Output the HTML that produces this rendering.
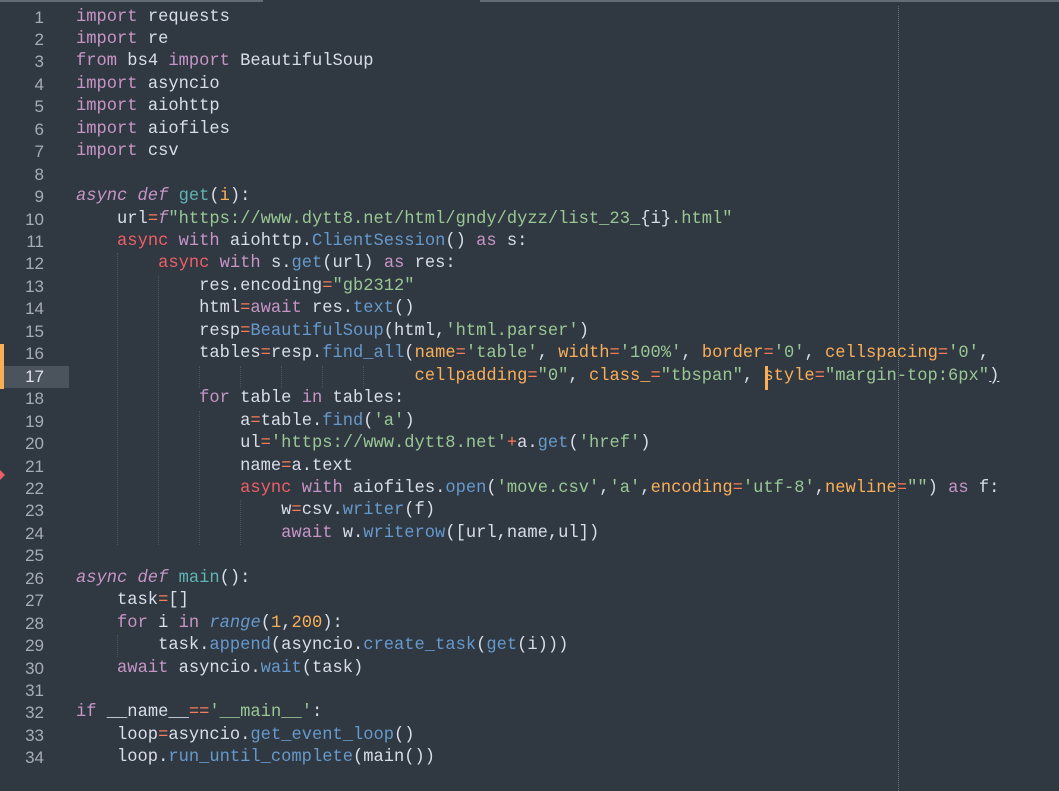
<!DOCTYPE html>
<html><head><meta charset="utf-8"><style>
html,body{margin:0;padding:0;width:1059px;height:791px;overflow:hidden;background:#303841;}
.l{position:absolute;left:76px;height:22px;line-height:22px;font:17.1px "Liberation Mono",monospace;color:#d8dee9;white-space:pre;}
.n{position:absolute;width:44px;text-align:right;height:22px;line-height:22px;font:17px "Liberation Sans",sans-serif;color:#a6acb9;left:0;}
.k{color:#c695c6}.r{color:#ec5f67}.b{color:#6699cc}.s{color:#99c794}.o{color:#f9ae58}.t{color:#5fb4b4}.p{color:#f97b58}.i{font-style:italic}
.g{position:absolute;width:0;border-left:1px dotted #4a525d;}
</style></head><body>
<div style="position:absolute;left:0;top:0;width:263px;height:2px;background:#646b75"></div>
<div style="position:absolute;left:480px;top:0;width:579px;height:2px;background:#646b75"></div>
<div style="position:absolute;left:898px;top:6px;height:785px;border-left:1px dotted #6a717b"></div>
<div style="position:absolute;left:0;top:344px;width:4px;height:45px;background:#f9ae58"></div>
<div style="position:absolute;left:4px;top:366px;width:65px;height:22px;background:#4b535d"></div>
<div style="position:absolute;left:0;top:470px;width:0;height:0;border-top:5px solid transparent;border-bottom:5px solid transparent;border-left:5px solid #ec5f67"></div>
<div class="g" style="left:117px;top:253px;height:292px"></div>
<div class="g" style="left:158px;top:276px;height:269px"></div>
<div class="g" style="left:199px;top:411px;height:134px"></div>
<div class="g" style="left:240px;top:500px;height:45px"></div>
<div class="g" style="left:199px;top:366px;height:22px"></div>
<div class="g" style="left:240px;top:366px;height:22px"></div>
<div class="g" style="left:281px;top:366px;height:22px"></div>
<div class="g" style="left:322px;top:366px;height:22px"></div>
<div class="g" style="left:363px;top:366px;height:22px"></div>
<div class="g" style="left:117px;top:635px;height:22px"></div>
<div style="position:absolute;left:765px;top:366px;width:3px;height:24px;background:#f9ae58"></div>
<div id="c"></div>
<script>
var L=[
'<span class="k">import</span> requests',
'<span class="k">import</span> re',
'<span class="k">from</span> bs4 <span class="k">import</span> BeautifulSoup',
'<span class="k">import</span> asyncio',
'<span class="k">import</span> aiohttp',
'<span class="k">import</span> aiofiles',
'<span class="k">import</span> csv',
'',
'<span class="k i">async def</span> <span class="t">get</span>(<span class="o">i</span>):',
'    url<span class="p">=</span><span class="k i">f</span><span class="s">"https://www.dytt8.net/html/gndy/dyzz/list_23_</span>{i}<span class="s">.html"</span>',
'    <span class="r">async</span> <span class="k">with</span> aiohttp.<span class="b">ClientSession</span>() <span class="k">as</span> s:',
'        <span class="r">async</span> <span class="k">with</span> s.<span class="b">get</span>(url) <span class="k">as</span> res:',
'            res.encoding<span class="p">=</span><span class="s">"gb2312"</span>',
'            html<span class="p">=</span><span class="k">await</span> res.<span class="b">text</span>()',
'            resp<span class="p">=</span><span class="b">BeautifulSoup</span>(html,<span class="s">\'html.parser\'</span>)',
'            tables<span class="p">=</span>resp.<span class="b">find_all</span>(<span class="o">name</span><span class="p">=</span><span class="s">\'table\'</span>, <span class="o">width</span><span class="p">=</span><span class="s">\'100%\'</span>, <span class="o">border</span><span class="p">=</span><span class="s">\'0\'</span>, <span class="o">cellspacing</span><span class="p">=</span><span class="s">\'0\'</span>,',
'                                 <span class="o">cellpadding</span><span class="p">=</span><span class="s">"0"</span>, <span class="o">class_</span><span class="p">=</span><span class="s">"tbspan"</span>, <span class="o">style</span><span class="p">=</span><span class="s">"margin-top:6px"</span><u>)</u>',
'            <span class="k">for</span> table <span class="k">in</span> tables:',
'                a<span class="p">=</span>table.<span class="b">find</span>(<span class="s">\'a\'</span>)',
'                ul<span class="p">=</span><span class="s">\'https://www.dytt8.net\'</span><span class="p">+</span>a.<span class="b">get</span>(<span class="s">\'href\'</span>)',
'                name<span class="p">=</span>a.text',
'                <span class="r">async</span> <span class="k">with</span> aiofiles.<span class="b">open</span>(<span class="s">\'move.csv\'</span>,<span class="s">\'a\'</span>,<span class="o">encoding</span><span class="p">=</span><span class="s">\'utf-8\'</span>,<span class="o">newline</span><span class="p">=</span><span class="s">""</span>) <span class="k">as</span> f:',
'                    w<span class="p">=</span>csv.<span class="b">writer</span>(f)',
'                    <span class="k">await</span> w.<span class="b">writerow</span>([url,name,ul])',
'',
'<span class="k i">async def</span> <span class="t">main</span>():',
'    task<span class="p">=</span>[]',
'    <span class="k">for</span> i <span class="k">in</span> <span class="b i">range</span>(<span class="o">1</span>,<span class="o">200</span>):',
'        task.<span class="b">append</span>(asyncio.<span class="b">create_task</span>(<span class="b">get</span>(i)))',
'    <span class="k">await</span> asyncio.<span class="b">wait</span>(task)',
'',
'<span class="k">if</span> __name__<span class="p">==</span><span class="s">\'__main__\'</span>:',
'    loop<span class="p">=</span>asyncio.<span class="b">get_event_loop</span>()',
'    loop.<span class="b">run_until_complete</span>(main())'
];
var h='';
for(var j=0;j<L.length;j++){var y=(7.5+j*22.45).toFixed(1);
h+='<div class="n" style="top:'+y+'px'+(j==16?';color:#e0e4ea':'')+'">'+(j+1)+'</div><div class="l" style="top:'+y+'px">'+L[j]+'</div>';}
document.getElementById('c').innerHTML=h;
</script>
</body></html>
